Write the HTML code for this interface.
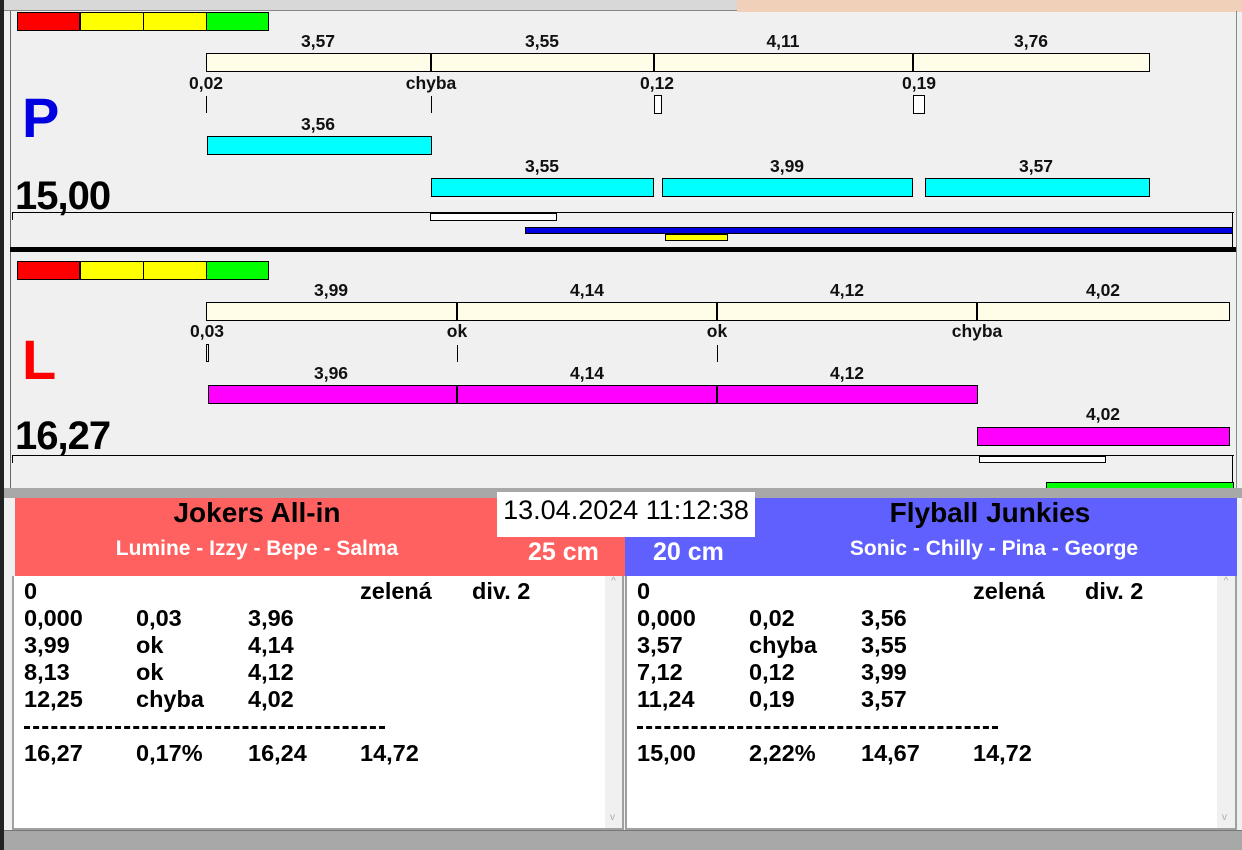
<!DOCTYPE html><html><head><meta charset="utf-8"><style>
*{margin:0;padding:0;box-sizing:border-box}
body{width:1242px;height:850px;position:relative;overflow:hidden;background:#f0f0f0;font-family:"Liberation Sans",Arial,sans-serif;font-weight:bold}
div{position:absolute}
.b{border:1px solid #000}
.l{font-size:17.5px;color:#111;transform:translateX(-50%);white-space:nowrap;line-height:16px}
.t{font-size:23.5px;line-height:27px;color:#000;white-space:nowrap}
.v{width:1px;background:#000}
</style></head><body>
<div style="left:0;top:0;width:737px;height:11px;background:#d8d8d8;border-bottom:1px solid #888"></div>
<div style="left:737px;top:0;width:505px;height:12px;background:#f0d0b8"></div>
<div style="left:0;top:0;width:4px;height:850px;background:#222"></div>
<div style="left:10px;top:11px;width:1px;height:480px;background:#666"></div>
<div style="left:1236px;top:11px;width:1px;height:480px;background:#888"></div>

<div class="b" style="left:17px;top:12px;width:63px;height:19px;background:#f00"></div>
<div class="b" style="left:80px;top:12px;width:64px;height:19px;background:#ff0"></div>
<div class="b" style="left:143px;top:12px;width:64px;height:19px;background:#ff0"></div>
<div class="b" style="left:206px;top:12px;width:63px;height:19px;background:#0f0"></div>
<div class="l" style="left:318px;top:33px">3,57</div>
<div class="l" style="left:542px;top:33px">3,55</div>
<div class="l" style="left:783px;top:33px">4,11</div>
<div class="l" style="left:1031px;top:33px">3,76</div>
<div class="b" style="left:206px;top:53px;width:944px;height:19px;background:#fffde8"></div>
<div class="v" style="left:430px;top:53px;height:19px;width:2px"></div>
<div class="v" style="left:653px;top:53px;height:19px;width:2px"></div>
<div class="v" style="left:912px;top:53px;height:19px;width:2px"></div>
<div class="l" style="left:206px;top:75px">0,02</div>
<div class="l" style="left:431px;top:75px">chyba</div>
<div class="l" style="left:657px;top:75px">0,12</div>
<div class="l" style="left:919px;top:75px">0,19</div>
<div class="v" style="left:206px;top:96px;height:17px"></div>
<div class="v" style="left:431px;top:96px;height:17px"></div>
<div class="b" style="left:654px;top:95px;width:8px;height:19px;background:#fff"></div>
<div class="b" style="left:913px;top:95px;width:12px;height:19px;background:#fff"></div>
<div style="left:22px;top:88px;font-size:56px;color:#0000e0;line-height:60px">P</div>
<div class="l" style="left:318px;top:116px">3,56</div>
<div class="b" style="left:207px;top:136px;width:225px;height:19px;background:#0ff"></div>
<div class="l" style="left:542px;top:158px">3,55</div>
<div class="l" style="left:787px;top:158px">3,99</div>
<div class="l" style="left:1036px;top:158px">3,57</div>
<div class="b" style="left:431px;top:178px;width:223px;height:19px;background:#0ff"></div>
<div class="b" style="left:662px;top:178px;width:251px;height:19px;background:#0ff"></div>
<div class="b" style="left:925px;top:178px;width:225px;height:19px;background:#0ff"></div>
<div style="left:15px;top:174px;font-size:40px;line-height:44px;color:#000;letter-spacing:-1px">15,00</div>
<div style="left:12px;top:212px;width:1222px;height:1px;background:#000"></div>
<div style="left:12px;top:212px;width:1px;height:8px;background:#000"></div>
<div style="left:1232px;top:212px;width:1px;height:36px;background:#000"></div>
<div class="b" style="left:430px;top:213px;width:127px;height:8px;background:#fff"></div>
<div style="left:525px;top:227px;width:708px;height:7px;background:#0000e0;border:1px solid #000"></div>
<div class="b" style="left:665px;top:234px;width:63px;height:7px;background:#ff0"></div>
<div style="left:10px;top:247px;width:1226px;height:5px;background:#000"></div>

<div class="b" style="left:17px;top:261px;width:63px;height:19px;background:#f00"></div>
<div class="b" style="left:80px;top:261px;width:64px;height:19px;background:#ff0"></div>
<div class="b" style="left:143px;top:261px;width:64px;height:19px;background:#ff0"></div>
<div class="b" style="left:206px;top:261px;width:63px;height:19px;background:#0f0"></div>
<div class="l" style="left:331px;top:282px">3,99</div>
<div class="l" style="left:587px;top:282px">4,14</div>
<div class="l" style="left:847px;top:282px">4,12</div>
<div class="l" style="left:1103px;top:282px">4,02</div>
<div class="b" style="left:206px;top:302px;width:1024px;height:19px;background:#fffde8"></div>
<div class="v" style="left:456px;top:302px;height:19px;width:2px"></div>
<div class="v" style="left:716px;top:302px;height:19px;width:2px"></div>
<div class="v" style="left:976px;top:302px;height:19px;width:2px"></div>
<div class="l" style="left:207px;top:323px">0,03</div>
<div class="l" style="left:457px;top:323px">ok</div>
<div class="l" style="left:717px;top:323px">ok</div>
<div class="l" style="left:977px;top:323px">chyba</div>
<div class="b" style="left:206px;top:344px;width:3px;height:18px"></div>
<div class="v" style="left:457px;top:345px;height:17px"></div>
<div class="v" style="left:717px;top:345px;height:17px"></div>
<div style="left:22px;top:330px;font-size:56px;color:#f00;line-height:60px">L</div>
<div class="l" style="left:331px;top:365px">3,96</div>
<div class="l" style="left:587px;top:365px">4,14</div>
<div class="l" style="left:847px;top:365px">4,12</div>
<div class="b" style="left:208px;top:385px;width:770px;height:19px;background:#f0f"></div>
<div class="v" style="left:456px;top:385px;height:19px;width:2px"></div>
<div class="v" style="left:716px;top:385px;height:19px;width:2px"></div>
<div class="l" style="left:1103px;top:406px">4,02</div>
<div class="b" style="left:977px;top:427px;width:253px;height:19px;background:#f0f"></div>
<div style="left:15px;top:414px;font-size:40px;line-height:44px;color:#000;letter-spacing:-1px">16,27</div>
<div style="left:12px;top:455px;width:1222px;height:1px;background:#000"></div>
<div style="left:12px;top:455px;width:1px;height:8px;background:#000"></div>
<div style="left:1232px;top:455px;width:1px;height:33px;background:#000"></div>
<div class="b" style="left:979px;top:456px;width:127px;height:7px;background:#fff"></div>
<div class="b" style="left:1046px;top:482px;width:188px;height:7px;background:#0f0"></div>

<div style="left:4px;top:488px;width:1238px;height:10px;background:#a8a8a8"></div>
<div style="left:15px;top:498px;width:610px;height:78px;background:#ff6060"></div>
<div style="left:625px;top:498px;width:612px;height:78px;background:#6060ff"></div>
<div style="left:497px;top:492px;width:258px;height:45px;background:#fff;font-weight:normal;font-size:27px;line-height:36px;text-align:center;color:#000;white-space:nowrap">13.04.2024 11:12:38</div>
<div style="left:57px;top:497px;width:400px;text-align:center;font-size:28px;line-height:32px;color:#000">Jokers All-in</div>
<div style="left:790px;top:497px;width:400px;text-align:center;font-size:28px;line-height:32px;color:#000">Flyball Junkies</div>
<div style="left:57px;top:537px;width:400px;text-align:center;font-size:21px;line-height:24px;color:#fff">Lumine - Izzy - Bepe - Salma</div>
<div style="left:794px;top:537px;width:400px;text-align:center;font-size:21px;line-height:24px;color:#fff">Sonic - Chilly - Pina - George</div>
<div style="left:528px;top:538px;font-size:25px;line-height:28px;color:#fff">25 cm</div>
<div style="left:653px;top:538px;font-size:25px;line-height:28px;color:#fff">20 cm</div>

<div style="left:12px;top:576px;width:612px;height:254px;background:#fff;border:2px solid #a0a0a0;border-top:none"></div>
<div style="left:605px;top:576px;width:17px;height:252px;background:#f0f0f0;color:#aaa;font-size:10px;font-weight:normal;text-align:center">^<div style="left:5px;top:236px">v</div></div>
<div style="left:625px;top:576px;width:612px;height:254px;background:#fff;border:2px solid #a0a0a0;border-top:none"></div>
<div style="left:1217px;top:576px;width:18px;height:252px;background:#f0f0f0;color:#aaa;font-size:10px;font-weight:normal;text-align:center">^<div style="left:5px;top:236px">v</div></div>

<div class="t" style="left:24px;top:578px">0</div><div class="t" style="left:360px;top:578px">zelená</div><div class="t" style="left:472px;top:578px">div. 2</div>
<div class="t" style="left:24px;top:605px">0,000</div><div class="t" style="left:136px;top:605px">0,03</div><div class="t" style="left:248px;top:605px">3,96</div>
<div class="t" style="left:24px;top:632px">3,99</div><div class="t" style="left:136px;top:632px">ok</div><div class="t" style="left:248px;top:632px">4,14</div>
<div class="t" style="left:24px;top:659px">8,13</div><div class="t" style="left:136px;top:659px">ok</div><div class="t" style="left:248px;top:659px">4,12</div>
<div class="t" style="left:24px;top:686px">12,25</div><div class="t" style="left:136px;top:686px">chyba</div><div class="t" style="left:248px;top:686px">4,02</div>
<div style="left:24px;top:726px;width:361px;height:0;border-top:3px dashed #000"></div>
<div class="t" style="left:24px;top:740px">16,27</div><div class="t" style="left:136px;top:740px">0,17%</div><div class="t" style="left:248px;top:740px">16,24</div><div class="t" style="left:360px;top:740px">14,72</div>

<div class="t" style="left:637px;top:578px">0</div><div class="t" style="left:973px;top:578px">zelená</div><div class="t" style="left:1085px;top:578px">div. 2</div>
<div class="t" style="left:637px;top:605px">0,000</div><div class="t" style="left:749px;top:605px">0,02</div><div class="t" style="left:861px;top:605px">3,56</div>
<div class="t" style="left:637px;top:632px">3,57</div><div class="t" style="left:749px;top:632px">chyba</div><div class="t" style="left:861px;top:632px">3,55</div>
<div class="t" style="left:637px;top:659px">7,12</div><div class="t" style="left:749px;top:659px">0,12</div><div class="t" style="left:861px;top:659px">3,99</div>
<div class="t" style="left:637px;top:686px">11,24</div><div class="t" style="left:749px;top:686px">0,19</div><div class="t" style="left:861px;top:686px">3,57</div>
<div style="left:637px;top:726px;width:361px;height:0;border-top:3px dashed #000"></div>
<div class="t" style="left:637px;top:740px">15,00</div><div class="t" style="left:749px;top:740px">2,22%</div><div class="t" style="left:861px;top:740px">14,67</div><div class="t" style="left:973px;top:740px">14,72</div>

<div style="left:4px;top:830px;width:1238px;height:20px;background:#a8a8a8;border-top:1px solid #777"></div>
</body></html>
